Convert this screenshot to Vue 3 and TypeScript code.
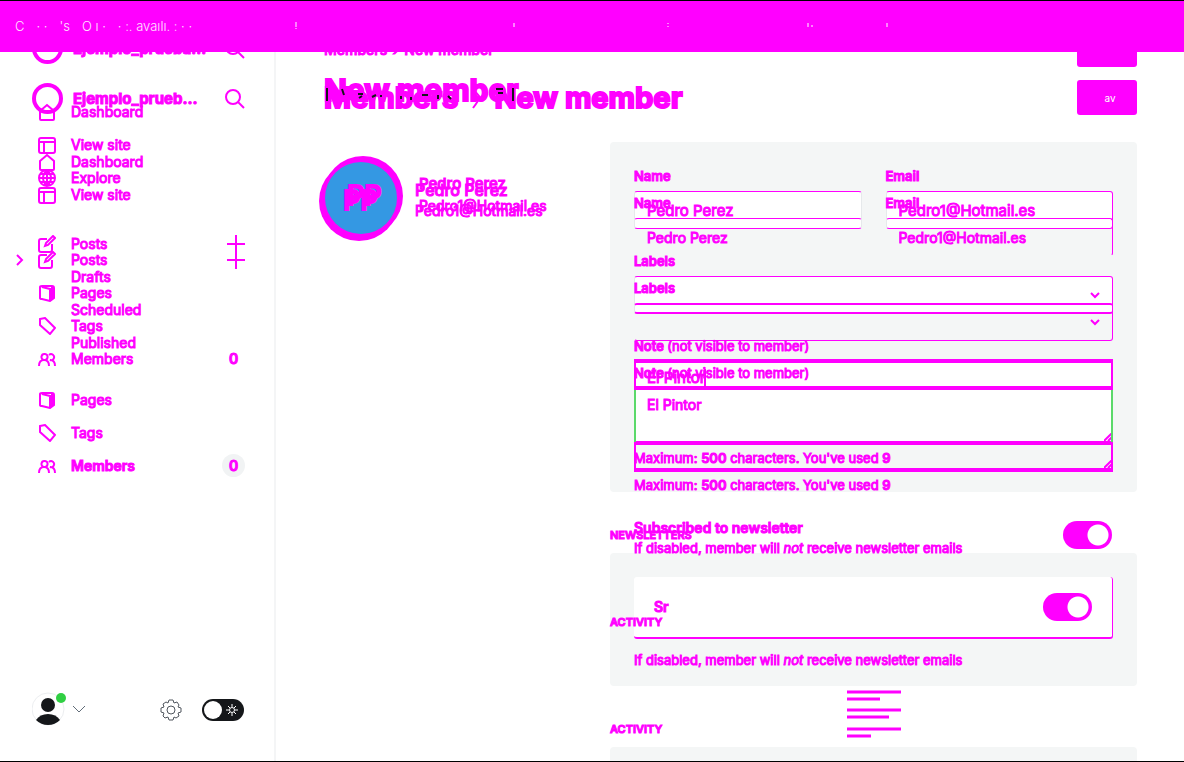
<script setup lang="ts">
import { ref } from 'vue'

type Icon = 'home' | 'site' | 'globe' | 'edit' | 'pages' | 'tag' | 'members' | ''
interface NavItem { text: string; icon: Icon; plus?: boolean; arrow?: boolean; count?: number; active?: boolean }

const icons: Record<string, string> = {
  home: 'M2 8 L9 2 L16 8 V16 Q16 17 15 17 H3 Q2 17 2 16 Z',
  site: 'M3 2 H15 Q17 2 17 4 V15 Q17 17 15 17 H3 Q1 17 1 15 V4 Q1 2 3 2 Z M2 6 H16 M6 7 V16',
  globe: 'M9 1 A8 8 0 1 0 9 17 A8 8 0 1 0 9 1 Z M1 9 H17 M2 5 H16 M2 13 H16 M9 1 V17 M9 1 Q1 9 9 17 M9 1 Q17 9 9 17',
  edit: 'M9 4 H3 Q1 4 1 6 V15 Q1 17 3 17 H12 Q14 17 14 15 V9 M7 11 L8 8 L15 1 L17 3 L10 10 Z',
  pages: 'M4 2 H14 Q16 2 16 4 V14 L12 17 L4 15 Q2 15 2 14 V3 Q2 2 4 2 M12 4 V16 M14 2 V15 M4 3 L12 5',
  tag: 'M2 2 L7 1 L17 11 L12 17 L2 8 Z',
  members: 'M1 16 Q1 10 6 10 Q11 10 11 16 M6 10 A3 3 0 1 1 7 4 A3 3 0 0 1 6 10 M11 5 A3 3 0 1 1 12 10 Q17 10 17 16',
}

const firstNav: NavItem[][] = [
  [{ text: 'Dashboard', icon: 'home' }, { text: 'View site', icon: 'site' }, { text: 'Explore', icon: 'globe' }],
  [{ text: 'Posts', icon: 'edit', plus: true }, { text: 'Drafts', icon: '' }, { text: 'Scheduled', icon: '' }, { text: 'Published', icon: '' }],
  [{ text: 'Pages', icon: 'pages' }, { text: 'Tags', icon: 'tag' }, { text: 'Members', icon: 'members', count: 0, active: true }],
]
const secondNav: NavItem[][] = [
  [{ text: 'Dashboard', icon: 'home' }, { text: 'View site', icon: 'site' }],
  [{ text: 'Posts', icon: 'edit', plus: true, arrow: true }, { text: 'Pages', icon: 'pages' }, { text: 'Tags', icon: 'tag' }, { text: 'Members', icon: 'members', count: 0 }],
]
const layers = [
  { key: 'first', nav: firstNav, site: 'Ejemplo_prueba...' },
  { key: 'second', nav: secondNav, site: 'Ejemplo_prueb...' },
]
const name = ref('Pedro Perez')
const email = ref('Pedro1@Hotmail.es')
const note = ref('El Pintor')
</script>

<template>
  <div class="frame">
    <div v-for="layer in layers" :key="layer.key" class="layer" :class="layer.key">
      <aside class="sidebar">
        <div class="site">
          <span class="logo"></span>
          <span class="site-name">{{ layer.site }}</span>
          <button class="plain" aria-label="Search">
            <svg width="20" height="20" viewBox="0 0 20 20"><circle cx="8" cy="8" r="7" /><path d="M13 13 L19 19" /></svg>
          </button>
        </div>
        <nav>
          <ul v-for="(group, g) in layer.nav" :key="g">
            <li v-for="item in group" :key="item.text">
              <svg v-if="item.arrow" class="arrow" width="8" height="12" viewBox="0 0 8 12"><path d="M1 1 L6 6 L1 11" /></svg>
              <a href="#" :class="{ active: item.active }">
                <span class="icon"><svg v-if="item.icon" width="18" height="18" viewBox="0 0 18 18"><path :d="icons[item.icon]" /></svg></span>
                {{ item.text }}
              </a>
              <button v-if="item.plus" class="plain" aria-label="New post">
                <svg width="18" height="18" viewBox="0 0 18 18"><path d="M9 0 V18 M0 9 H18" /></svg>
              </button>
              <span v-if="item.count !== undefined" class="count">{{ item.count }}</span>
            </li>
          </ul>
        </nav>
        <footer v-if="layer.key === 'first'">
          <button class="user" aria-label="Account">
            <svg width="56" height="36" viewBox="0 0 56 36">
              <circle cx="16" cy="19" r="16" fill="#fff" stroke="#eceef0" />
              <circle cx="16" cy="15" r="7" fill="#15171a" />
              <path d="M4 30 Q8 24 16 24 Q24 24 28 30 Q23 35 16 35 Q9 35 4 30Z" fill="#15171a" />
              <circle cx="29" cy="8" r="5" fill="#30cf43" />
              <path d="M41 16 L47 22 L53 16" fill="none" stroke="#626d79" />
            </svg>
          </button>
          <button class="plain gear" aria-label="Settings">
            <svg width="22" height="22" viewBox="0 0 22 22">
              <path d="M9 1 H13 L14 4 L17 3 L19 6 L18 8 L21 9 V13 L18 14 L19 17 L16 19 L14 18 L13 21 H9 L8 18 L5 19 L3 17 L4 14 L1 13 V9 L4 8 L3 5 L6 3 L8 4 Z" stroke-linejoin="round" />
              <circle cx="11" cy="11" r="4" />
            </svg>
          </button>
          <label class="night">
            <input type="checkbox" aria-label="Night shift" />
            <svg width="42" height="22" viewBox="0 0 42 22">
              <rect width="42" height="22" rx="11" fill="#15171a" /><circle cx="11" cy="11" r="9" fill="#fff" />
              <g stroke="#fff" fill="none"><circle cx="30" cy="11" r="2.5" /><path d="M30 5 V8 M30 14 V17 M24 11 H27 M33 11 H36 M26 7 L28 9 M32 13 L34 15 M34 7 L32 9 M28 13 L26 15" /></g>
            </svg>
          </label>
        </footer>
      </aside>

      <main>
        <header v-if="layer.key === 'first'">
          <div>
            <p class="crumbs">Members <i>›</i> New member</p>
            <h1>New member</h1>
          </div>
          <button class="save" aria-label="Save"></button>
        </header>
        <header v-else>
          <h1>
            Members
            <svg class="chevron" width="10" height="24" viewBox="0 0 10 24"><path d="M2 3 L8 10 Q9 13 2 22" /></svg>
            New member
            <svg class="flecks" width="200" height="36" viewBox="0 0 200 36">
              <path d="M3 8 V21 M18 9 L20 15 M34 14 H39 M35 18 L38 16 M48 17 L52 15 M56 16 H58 M77 16 V19 M87 17 V20 M98 15 H104 M114 15 V19 M124 16 L127 19 M172 9 H179 M174 13 H179 M189 8 V21" />
            </svg>
          </h1>
          <button class="save" aria-label="Save">av</button>
        </header>

        <div class="columns">
          <section class="person">
            <svg v-if="layer.key === 'second'" class="avatar" width="84" height="85" viewBox="0 0 84 85">
              <circle cx="44" cy="40" r="40" fill="#f0f" /><circle cx="40" cy="45" r="40" fill="#f0f" />
              <circle cx="42" cy="42" r="36" fill="#3498e3" />
              <g fill="#f0f" stroke="#f0f" stroke-width="2"><text x="24" y="54" font-size="27">PP</text><text x="28" y="49" font-size="27">PP</text></g>
            </svg>
            <div class="identity">
              <h2>{{ name }}</h2>
              <p>{{ email }}</p>
            </div>
          </section>

          <div class="details">
            <form class="panel" @submit.prevent>
              <div class="pair">
                <div class="field">
                  <label :for="layer.key + '-name'">Name</label>
                  <input :id="layer.key + '-name'" v-model="name" class="box" />
                </div>
                <div class="field">
                  <label :for="layer.key + '-email'">Email</label>
                  <input :id="layer.key + '-email'" v-model="email" class="box edge" />
                </div>
              </div>
              <div class="field">
                <label :for="layer.key + '-labels'">Labels</label>
                <div class="select">
                  <select :id="layer.key + '-labels'" class="box edge"><option></option></select>
                  <svg width="10" height="7" viewBox="0 0 10 7"><path d="M1 1 L5 5 L9 1" /></svg>
                </div>
              </div>
              <div class="field">
                <label :for="layer.key + '-note'">Note <span>(not visible to member)</span></label>
                <div class="area">
                  <textarea :id="layer.key + '-note'" v-model="note"></textarea>
                  <i v-if="layer.key === 'first'" class="caret"></i>
                  <svg width="8" height="8" viewBox="0 0 8 8"><path d="M0 8 L8 0 M4 8 L8 4" /></svg>
                </div>
                <p class="hint">Maximum: <b>500</b> characters. You've used <b>9</b></p>
              </div>
            </form>

            <template v-if="layer.key === 'first'">
              <h4>NEWSLETTERS</h4>
              <section class="panel news">
                <div class="card">
                  <label for="sr">Sr</label>
                  <input id="sr" type="checkbox" class="toggle" checked />
                </div>
                <p class="help">If disabled, member will <em>not</em> receive newsletter emails</p>
              </section>
              <h4>ACTIVITY</h4>
              <section class="panel activity"></section>
            </template>
            <template v-else>
              <section class="subscription">
                <div>
                  <label for="subscribed">Subscribed to newsletter</label>
                  <p class="help">If disabled, member will <em>not</em> receive newsletter emails</p>
                </div>
                <input id="subscribed" type="checkbox" class="toggle" checked />
              </section>
              <h4>ACTIVITY</h4>
              <section class="feed">
                <svg width="54" height="48" viewBox="0 0 54 48"><path d="M0 2 H54 M0 9 H33 M0 20 H54 M0 27 H42 M0 39 H54 M0 46 H24" /></svg>
              </section>
            </template>
          </div>
        </div>
      </main>
    </div>
    <div class="banner">
      <span class="words"><span>C</span><span>· ·</span><span>'s</span><span>O ı ·</span><span>· :. avaılı. : · ·</span></span>
      <svg width="600" height="8" viewBox="0 0 600 8" aria-hidden="true"><path d="M1 0 V5 M1 6 V7 M219 1 V5 M373 1 V2 M373 4 V5 M513 1 V5 M517 3 V5 M592 1 V5" /></svg>
    </div>
  </div>
</template>

<style>
body { margin: 0; }
</style>

<style scoped>
* { box-sizing: border-box; }
.frame { position: relative; height: 100vh; overflow: hidden; background: #fff; border-top: 1px solid #000; border-bottom: 1px solid #000; font-family: Inter, "Liberation Sans", sans-serif; font-size: 14px; color: #f0f; }
.layer { position: absolute; inset: 0; display: flex; }
svg { display: block; }
button { font: inherit; border: 0; padding: 0; background: none; cursor: pointer; }
h1, h2, h4, p, ul { margin: 0; padding: 0; }
.banner { position: absolute; inset: 0 0 auto; height: 51px; display: flex; align-items: center; padding: 0 15px 2px; background: #f0f; color: #ffe4ff; font-size: 13px; font-weight: 300; }
.words { display: flex; gap: 12px; width: 280px; }
.banner svg { stroke: #fff; }

.sidebar { width: 276px; flex: none; display: flex; flex-direction: column; padding: 32px 31px 35px 32px; }
.first .sidebar { border-right: 2px solid #f4f5f6; padding-right: 29px; }
.second .sidebar { padding-top: 82px; }
.site { display: flex; align-items: center; height: 31px; }
.logo { width: 31px; height: 31px; border: 4px solid #f0f; border-radius: 50%; }
.site-name { flex: 1; margin-left: 10px; font-size: 15px; font-weight: 700; -webkit-text-stroke: 1px #f0f; white-space: nowrap; }
.plain svg { fill: none; stroke: #f0f; stroke-width: 2px; }
.plain.gear svg { stroke: #50565e; stroke-width: 1px; }
nav { margin-top: 31px; }
ul { list-style: none; }
.first ul + ul { margin-top: 33px; }
.first ul + ul + ul { margin-top: 24px; }
.second ul + ul { margin-top: 32px; }
li { position: relative; display: flex; align-items: center; height: 33px; }
li a { display: flex; align-items: center; flex: 1; color: #f0f; text-decoration: none; font-weight: 400; -webkit-text-stroke: 1px #f0f; }
li a.active { font-weight: 600; }
.icon { width: 18px; margin: 0 15px 0 6px; }
.icon svg, .arrow { fill: none; stroke: #f0f; stroke-width: 2px; }
.arrow { position: absolute; left: -16px; }
.count { width: 23px; height: 23px; line-height: 23px; border-radius: 50%; text-align: center; font-weight: 600; -webkit-text-stroke: 1px #f0f; }
.first .count { background: #f1f3f4; }
footer { margin-top: auto; display: flex; align-items: flex-end; padding-right: 1px; }
.user { margin-right: auto; }
.gear { margin: 0 20px 5px 0; }
.night { position: relative; display: block; margin-bottom: 5px; }
.night input { position: absolute; inset: 0; margin: 0; opacity: 0; }

main { flex: 1; min-width: 0; padding: 0 47px; }
header { display: flex; align-items: flex-start; justify-content: space-between; height: 141px; padding-left: 1px; }
.first header { padding-top: 31px; }
.second header { height: 168px; padding-top: 79px; }
.crumbs { height: 40px; line-height: 36px; font-weight: 500; -webkit-text-stroke: 1px #f0f; }
.crumbs i { margin: 0 2px; }
h1 { position: relative; display: flex; gap: 13px; align-items: center; font-size: 30px; line-height: 36px; font-weight: 700; -webkit-text-stroke: 2px #f0f; }
.second h1 { font-size: 29px; }
.chevron { fill: none; stroke: #f0f; stroke-width: 2px; }
.flecks { position: absolute; left: 0; top: 0; fill: none; stroke: #15171a; stroke-width: 2px; }
.save { width: 60px; height: 35px; padding-left: 6px; background: #f0f; color: #fff; font-size: 10px; border-radius: 3px; }
.columns { display: grid; grid-template-columns: 287px 1fr; }
.person { position: relative; display: flex; padding: 31px 0 0 96px; }
.second .person { padding: 10px 0 0 92px; }
.avatar { position: absolute; left: -4px; top: -13px; font-weight: 500; }
h2 { font-size: 16px; line-height: 22px; font-weight: 500; -webkit-text-stroke: 1px #f0f; }
.first h2 { font-size: 15px; }
.identity p { line-height: 22px; -webkit-text-stroke: 1px #f0f; }
.second .identity p { line-height: 20px; }
.first .panel { background: #f4f6f6; border-radius: 4px; }
.panel { padding: 24px; }
.second .panel { padding-bottom: 23px; }
.pair { display: grid; grid-template-columns: 1fr 1fr; gap: 24px; }
.panel > .field { margin-top: 22px; }
label { display: block; line-height: 20px; font-size: 13px; font-weight: 600; -webkit-text-stroke: 1px #f0f; }
label span { font-weight: 400; }
.field > label { margin-bottom: 5px; }
.box { display: block; width: 100%; height: 38px; padding: 0 12px; margin: 0; border: 1px solid #e6e9eb; border-top-color: #f0f; border-bottom-color: #f0f; border-radius: 3px; background: #fff; color: #f0f; font: 400 15px Inter, sans-serif; outline: 0; appearance: none; -webkit-text-stroke: 1px #f0f; }
.edge { border-right-color: #f0f; }
.second .box { background: none; font-size: 14px; border-left-color: transparent; }
.second .pair .box { border-bottom-color: transparent; }
.second .pair .box:not(.edge) { border-right-color: transparent; }
.first .select .box { border-bottom-width: 2px; }
.second .select .box { border-top-width: 2px; }
.select, .area { position: relative; }
.select svg { position: absolute; right: 13px; top: 16px; fill: none; stroke: #f0f; stroke-width: 2px; }
.area { margin: -2px 0; }
textarea { display: block; width: 100%; height: 86px; resize: none; padding: 5px 11px; border: solid #f0f; border-width: 4px 2px; border-image: linear-gradient(#f0f 30px, #5bd96a 30px, #5bd96a 82px, #f0f 82px) 4 2; background: #fff; color: #f0f; font: 400 15px/20px Inter, sans-serif; outline: 0; -webkit-text-stroke: 1px #f0f; }
.second textarea { background: none; font-size: 14px; border-image: linear-gradient(#f0f 4px, #5bd96a 4px, #5bd96a 56px, #f0f 56px) 4 2; }
.caret { position: absolute; left: 70px; top: 10px; width: 2px; height: 17px; background: #f0f; }
.area svg { position: absolute; right: 1px; bottom: 4px; stroke: #f0f; stroke-width: 2px; }
.hint { margin-top: 5px; line-height: 20px; font-size: 13px; -webkit-text-stroke: 1px #f0f; }
.hint b { font-weight: 600; }
h4 { margin: 34px 0 9px; line-height: 18px; font-size: 11px; font-weight: 600; -webkit-text-stroke: 1px #f0f; }
.card { display: flex; align-items: center; justify-content: space-between; height: 62px; padding: 0 20px; background: #fff; border-bottom: 2px solid #f0f; border-right: 1px solid #f0f; border-radius: 3px; }
.card label { font-size: 14px; }
.news { padding-bottom: 16px; }
.help { line-height: 20px; font-size: 13px; font-weight: 400; -webkit-text-stroke: 1px #f0f; }
.news .help { margin-top: 11px; }
.activity { height: 160px; }
.toggle { appearance: none; flex: none; width: 49px; height: 28px; margin: 0; border-radius: 14px; background: radial-gradient(circle at 35px 14px, #fff 10px, #f0f 11px); }
.subscription { display: flex; justify-content: space-between; padding: 0 25px 0 24px; }
.subscription .toggle { margin-top: 3px; }
.subscription label { font-size: 14px; }
.second h4 { margin-top: 55px; }
.feed { display: flex; justify-content: center; margin-top: 59px; }
.feed svg { stroke: #f0f; stroke-width: 3px; }
</style>
